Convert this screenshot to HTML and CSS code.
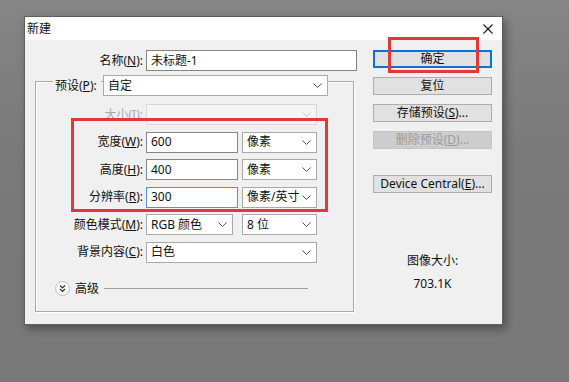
FILE: index.html
```html
<!DOCTYPE html>
<html lang="zh-CN">
<head>
    <meta charset="UTF-8">
    <title>新建</title>
    <link rel="stylesheet" href="styles.css">
</head>
<body>
<div class="screen">
    <div class="dialog">
        <div class="titlebar">
            <span class="title">新建</span>
            <svg class="close" viewBox="0 0 10 10"><path d="M0.5 0.5L9.5 9.5M9.5 0.5L0.5 9.5" stroke="#1a1a1a" stroke-width="1.1" fill="none"/></svg>
        </div>

        <div class="content">
            <div class="main">
                <div class="name-row">
                    <span class="label name-label">名称(<u>N</u>):</span>
                    <div class="field text-field w-name">未标题-1</div>
                </div>

                <div class="group">
                    <div class="preset-row">
                        <span class="legend">预设(<u>P</u>):</span>
                        <div class="field select w-preset">自定<svg class="chev" viewBox="0 0 9 5"><path d="M0.5 0.5L4.5 4.5L8.5 0.5" fill="none" stroke="#555"/></svg></div>
                    </div>

                    <div class="rows">
                        <div class="row disabled">
                            <span class="label">大小(<u>I</u>):</span>
                            <div class="field select w-full off"><span></span><svg class="chev" viewBox="0 0 9 5"><path d="M0.5 0.5L4.5 4.5L8.5 0.5" fill="none" stroke="#c4c4c4"/></svg></div>
                        </div>
                        <div class="row">
                            <span class="label">宽度(<u>W</u>):</span>
                            <div class="field text-field w-num">600</div>
                            <div class="field select w-unit">像素<svg class="chev" viewBox="0 0 9 5"><path d="M0.5 0.5L4.5 4.5L8.5 0.5" fill="none" stroke="#555"/></svg></div>
                        </div>
                        <div class="row">
                            <span class="label">高度(<u>H</u>):</span>
                            <div class="field text-field w-num">400</div>
                            <div class="field select w-unit">像素<svg class="chev" viewBox="0 0 9 5"><path d="M0.5 0.5L4.5 4.5L8.5 0.5" fill="none" stroke="#555"/></svg></div>
                        </div>
                        <div class="row">
                            <span class="label">分辨率(<u>R</u>):</span>
                            <div class="field text-field w-num focus">300</div>
                            <div class="field select w-unit">像素/英寸<svg class="chev" viewBox="0 0 9 5"><path d="M0.5 0.5L4.5 4.5L8.5 0.5" fill="none" stroke="#555"/></svg></div>
                        </div>
                        <div class="row">
                            <span class="label">颜色模式(<u>M</u>):</span>
                            <div class="field select w-mode">RGB 颜色<svg class="chev" viewBox="0 0 9 5"><path d="M0.5 0.5L4.5 4.5L8.5 0.5" fill="none" stroke="#555"/></svg></div>
                            <div class="field select w-unit">8 位<svg class="chev" viewBox="0 0 9 5"><path d="M0.5 0.5L4.5 4.5L8.5 0.5" fill="none" stroke="#555"/></svg></div>
                        </div>
                        <div class="row">
                            <span class="label">背景内容(<u>C</u>):</span>
                            <div class="field select w-full">白色<svg class="chev" viewBox="0 0 9 5"><path d="M0.5 0.5L4.5 4.5L8.5 0.5" fill="none" stroke="#555"/></svg></div>
                        </div>
                    </div>

                    <div class="advanced">
                        <svg class="adv-btn" viewBox="0 0 15 15">
                            <circle cx="7.5" cy="7.5" r="7" fill="#f7f7f7" stroke="#c2c2c2"/>
                            <path d="M5 4.5L7.5 7L10 4.5M5 8L7.5 10.5L10 8" fill="none" stroke="#333" stroke-width="1.2"/>
                        </svg>
                        <span>高级</span>
                        <div class="adv-line"></div>
                    </div>
                </div>
            </div>

            <div class="side">
                <div class="btn default">确定</div>
                <div class="btn">复位</div>
                <div class="btn">存储预设(<u>S</u>)...</div>
                <div class="btn off">删除预设(<u>D</u>)...</div>
                <div class="btn device">Device Central(<u>E</u>)...</div>
                <div class="info">
                    <div>图像大小:</div>
                    <div class="info-value">703.1K</div>
                </div>
            </div>
        </div>

        <!-- 红色标注框 -->
        <div class="mark mark-ok"></div>
        <div class="mark mark-dims"></div>
    </div>
</div>
</body>
</html>
```

FILE: styles.css
```css
body {
    margin: 0;
    background-color: #7b7b7b;
    font-family: 'Noto Sans', 'Noto Sans CJK SC', sans-serif;
    font-size: 12px;
    color: #111;
}
u {
    text-decoration: underline;
    text-underline-offset: 1px;
}
.screen {
    width: 569px;
    height: 382px;
    padding: 16px 0 0 24px;
    box-sizing: border-box;
    background: linear-gradient(#858585, #7a7a7a 40%, #787878);
    overflow: hidden;
}
.dialog {
    position: relative;
    width: 479px;
    height: 309px;
    box-sizing: border-box;
    border: 1px solid #5f5f5f;
    background-color: #f0f0f0;
    box-shadow: 3px 4px 8px rgba(0, 0, 0, 0.35);
}
.titlebar {
    height: 23px;
    background-color: #fff;
    display: flex;
    align-items: center;
    justify-content: space-between;
    padding: 0 9px 0 2px;
}
.title {
    line-height: 16px;
    margin-top: 1px;
}
.close {
    width: 10px;
    height: 10px;
}
.content {
    display: grid;
    grid-template-columns: 348px 119px;
    padding-top: 10px;
}
.name-row, .row, .preset-row {
    display: flex;
    align-items: center;
}
.label {
    width: 107px;
    margin-right: 3px;
    text-align: right;
    white-space: nowrap;
    line-height: 16px;
}
.name-label {
    width: 118px;
}
.field {
    height: 21px;
    box-sizing: border-box;
    background-color: #fff;
    display: flex;
    align-items: center;
    justify-content: space-between;
    padding-left: 4px;
    white-space: nowrap;
    line-height: 16px;
}
.text-field {
    border: 1px solid #858585;
}
.text-field.focus {
    border-color: #4d98dc;
}
.select {
    border: 1px solid #a9a9a9;
}
.select.off {
    background-color: #f5f5f5;
    border-color: #d8d8d8;
}
.chev {
    width: 9px;
    height: 5px;
    margin-right: 5px;
    flex-shrink: 0;
}
.w-name { width: 211px; }
.w-preset { width: 225px; }
.w-full { width: 171px; }
.w-num { width: 92px; margin-right: 4px; }
.w-unit { width: 75px; }
.w-mode { width: 87px; margin-right: 9px; }

.group {
    margin: 10px 0 0 10px;
    width: 319px;
    height: 231px;
    box-sizing: border-box;
    border: 1px solid #a9a9a9;
    box-shadow: inset 1px 1px 0 #fff, 1px 1px 0 #fff;
}
.preset-row {
    margin-top: -7px;
    padding-left: 17px;
}
.legend {
    width: 44px;
    padding: 0 2px;
    background-color: #f0f0f0;
    line-height: 16px;
    white-space: nowrap;
}
.preset-row .field {
    margin-left: 2px;
}
.rows {
    margin-top: 8px;
    display: flex;
    flex-direction: column;
    gap: 6.6px;
}
.row.disabled .label {
    color: #a8a8a8;
}
.advanced {
    margin-top: 18px;
    padding-left: 19px;
    display: flex;
    align-items: center;
}
.adv-btn {
    width: 15px;
    height: 15px;
    margin-right: 5px;
}
.advanced span {
    line-height: 16px;
}
.adv-line {
    flex: 1;
    height: 1px;
    background-color: #a0a0a0;
    margin: 0 45px 0 5px;
}

.side {
    display: flex;
    flex-direction: column;
    gap: 9px;
}
.btn {
    height: 18px;
    box-sizing: border-box;
    border: 1px solid #adadad;
    background-color: #e1e1e1;
    text-align: center;
    line-height: 15px;
    white-space: nowrap;
}
.btn.default {
    border-color: #0a74d4;
    box-shadow: inset 0 0 0 1px #0a74d4;
}
.btn.off {
    background-color: #cdcdcd;
    border-color: #c4c4c4;
    color: #9c9c9c;
}
.btn.device {
    margin-top: 17px;
}
.info {
    margin-top: 51px;
    text-align: center;
    line-height: 16px;
}
.info-value {
    margin-top: 7px;
}

.mark {
    position: absolute;
    border: 3px solid #e2373d;
    box-sizing: border-box;
    pointer-events: none;
}
.mark-ok {
    left: 363px;
    top: 20px;
    width: 91px;
    height: 36px;
}
.mark-dims {
    left: 46px;
    top: 101px;
    width: 257px;
    height: 94px;
}
```
